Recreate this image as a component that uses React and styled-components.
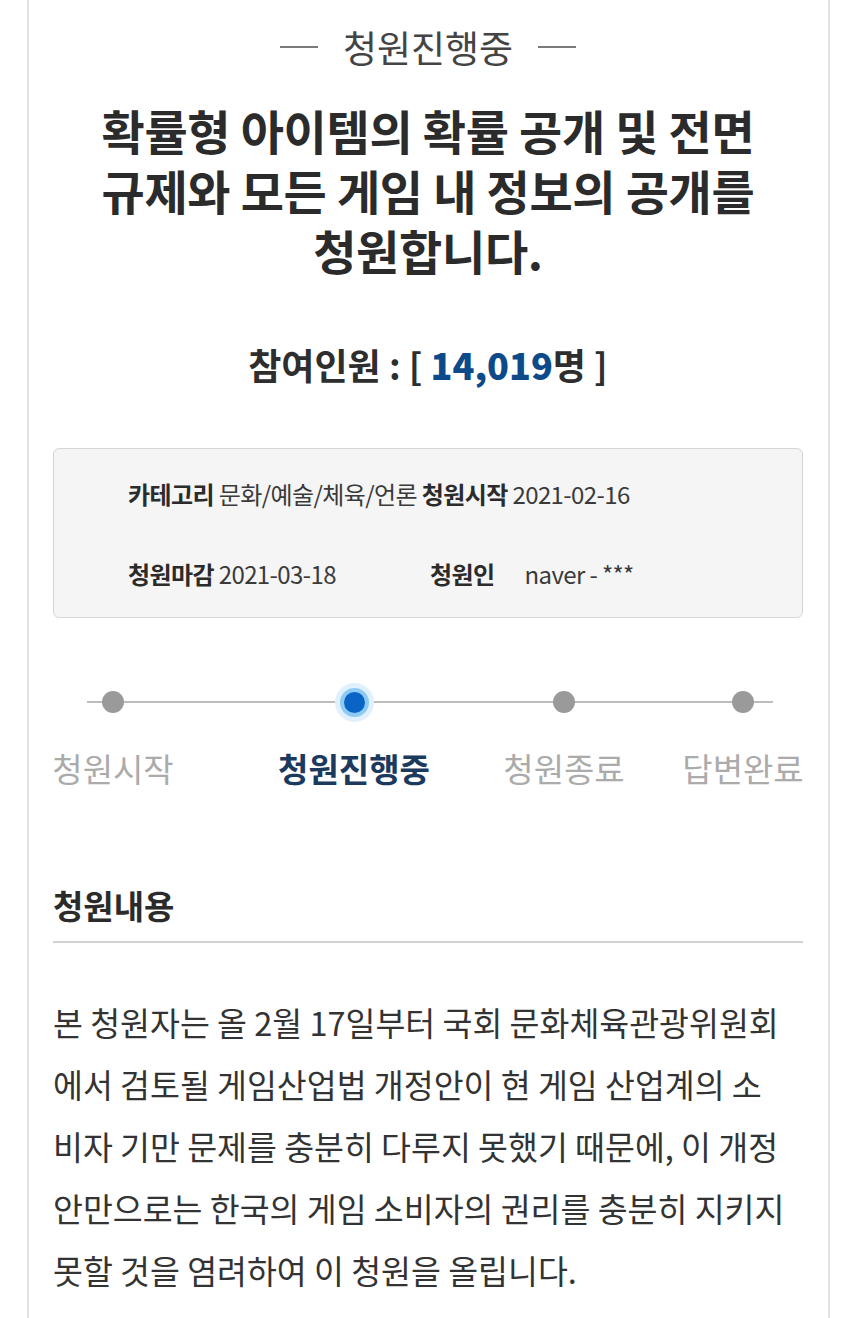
import styled, { createGlobalStyle } from 'styled-components';

const GlobalStyle = createGlobalStyle`
    body {
        margin: 0;
        background: #ffffff;
        font-family: "Noto Sans CJK KR", "Noto Sans", sans-serif;
        color: #333333;
    }
`

const steps = [
    { label: "청원시작", width: 240 },
    { label: "청원진행중", width: 242, active: true },
    { label: "청원종료", width: 178 },
    { label: "답변완료", width: 180 },
];

function Step({ label, width, active }) {
    return (
        <StepItem $width={width}>
            <DotHolder>
                <Dot $active={active} />
            </DotHolder>
            <StepLabel $active={active}>{label}</StepLabel>
        </StepItem>
    )
}

export default function App() {
    return (
        <>
            <GlobalStyle />
            <Page>
                <Status>
                    <Dash />
                    <span>청원진행중</span>
                    <Dash />
                </Status>
                <Title>
                    확률형 아이템의 확률 공개 및 전면<br />
                    규제와 모든 게임 내 정보의 공개를<br />
                    청원합니다.
                </Title>
                <Count>
                    참여인원 : [ <strong>14,019</strong>명 ]
                </Count>
                <InfoBox>
                    <InfoRow>
                        <Label>카테고리</Label> 문화/예술/체육/언론 <Label>청원시작</Label> 2021-02-16
                    </InfoRow>
                    <InfoRow>
                        <InfoCell $width={302}>
                            <Label>청원마감</Label> 2021-03-18
                        </InfoCell>
                        <InfoCell>
                            <Label $gap={30}>청원인</Label>naver - ***
                        </InfoCell>
                    </InfoRow>
                </InfoBox>
                <Steps>
                    {steps.map(s => <Step key={s.label} label={s.label} width={s.width} active={s.active} />)}
                </Steps>
                <SectionTitle>청원내용</SectionTitle>
                <Body>
                    본 청원자는 올 2월 17일부터 국회 문화체육관광위원회<br />
                    에서 검토될 게임산업법 개정안이 현 게임 산업계의 소<br />
                    비자 기만 문제를 충분히 다루지 못했기 때문에, 이 개정<br />
                    안만으로는 한국의 게임 소비자의 권리를 충분히 지키지<br />
                    못할 것을 염려하여 이 청원을 올립니다.
                </Body>
            </Page>
        </>
    )
}

const Page = styled.div`
    width: 803px;
    box-sizing: border-box;
    margin-left: 27px;
    min-height: 1318px;
    padding: 25px 25px 0 24px;
    border-left: 2px solid #e3e3e3;
    border-right: 2px solid #e3e3e3;
`

const Status = styled.div`
    display: flex;
    align-items: center;
    justify-content: center;
    gap: 25px;
    font-size: 37px;
    line-height: 44px;
    color: #444444;
`

const Dash = styled.i`
    display: block;
    width: 38px;
    height: 2px;
    background: #7a7a7a;
`

const Title = styled.h1`
    margin: 31px 0 0;
    text-align: center;
    font-size: 47px;
    line-height: 60px;
    font-weight: 700;
    color: #2b2b2b;
    white-space: nowrap;
    letter-spacing: -0.3px;
`

const Count = styled.div`
    margin-top: 62px;
    text-align: center;
    font-size: 36px;
    line-height: 44px;
    font-weight: 700;
    color: #2e2e2e;

    strong {
        color: #0d4a8a;
    }
`

const InfoBox = styled.div`
    margin-top: 62px;
    height: 170px;
    box-sizing: border-box;
    padding: 30px 20px 0 74px;
    background: #f5f5f5;
    border: 1px solid #d6d6d6;
    border-radius: 6px;
    display: flex;
    flex-direction: column;
    gap: 50px;
`

const InfoRow = styled.div`
    display: flex;
    align-items: center;
    font-size: 24px;
    line-height: 30px;
    color: #3a3a3a;
    letter-spacing: -0.6px;
    white-space: pre;
`

const InfoCell = styled.div`
    width: ${p => p.$width ? `${p.$width}px` : 'auto'};
    white-space: pre;
`

const Label = styled.b`
    font-weight: 700;
    color: #2b2b2b;
    margin-right: ${p => p.$gap ? `${p.$gap}px` : '0'};
`

const Steps = styled.div`
    position: relative;
    margin: 64px -30px 0 -60px;
    display: flex;

    &::before {
        content: "";
        position: absolute;
        left: 94px;
        right: 60px;
        top: 19px;
        height: 2px;
        background: #bdbdbd;
    }
`

const StepItem = styled.div`
    width: ${p => p.$width}px;
    display: flex;
    flex-direction: column;
    align-items: center;
    gap: 26px;
`

const DotHolder = styled.div`
    height: 40px;
    display: flex;
    align-items: center;
    justify-content: center;
    position: relative;
`

const Dot = styled.span`
    display: block;
    width: ${p => p.$active ? 21 : 22}px;
    height: ${p => p.$active ? 21 : 22}px;
    border-radius: 50%;
    background: ${p => p.$active ? '#0a64c6' : '#9a9a9a'};
    box-shadow: ${p => p.$active ? '0 0 0 4px #8dcbf4, 0 0 0 9px #e0f0fc' : 'none'};
`

const StepLabel = styled.div`
    font-size: 33px;
    line-height: 40px;
    white-space: nowrap;
    font-weight: ${p => p.$active ? 700 : 400};
    color: ${p => p.$active ? '#1b3a5e' : '#ababab'};
`

const SectionTitle = styled.h2`
    margin: 97px 0 0;
    padding-bottom: 16px;
    border-bottom: 2px solid #d2d2d2;
    font-size: 33px;
    line-height: 40px;
    font-weight: 700;
    color: #2b2b2b;
`

const Body = styled.p`
    margin: 48px 0 0;
    font-size: 32.5px;
    line-height: 62px;
    color: #333333;
    white-space: nowrap;
`
